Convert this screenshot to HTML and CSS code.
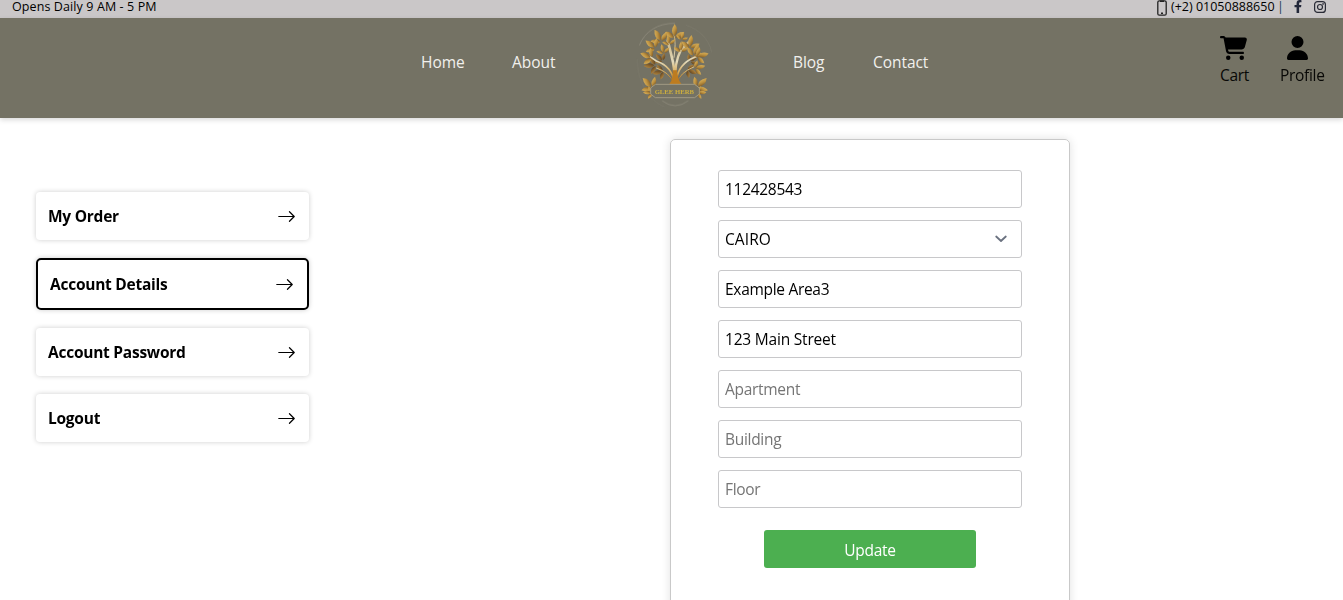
FILE: index.html
```
<!DOCTYPE html>
<html lang="en">
<head>
<meta charset="utf-8">
<title>Glee Herb - Account</title>
<link rel="stylesheet" href="styles.css">
</head>
<body>
<svg class="defs" aria-hidden="true">
  <defs>
    <linearGradient id="gold" x1="0" y1="0" x2="1" y2="1"><stop offset="0" stop-color="#e2bd68"/><stop offset=".5" stop-color="#bd913f"/><stop offset="1" stop-color="#65451f"/></linearGradient>
    <linearGradient id="bronze" x1="0" y1="0" x2="1" y2="1"><stop offset="0" stop-color="#c89543"/><stop offset="1" stop-color="#4c351c"/></linearGradient>
    <linearGradient id="trunk" gradientUnits="userSpaceOnUse" x1="0" y1="60" x2="0" y2="205"><stop offset="0" stop-color="#c5ab75"/><stop offset=".55" stop-color="#e3dabb"/><stop offset=".8" stop-color="#d6a44d"/><stop offset="1" stop-color="#8b5716"/></linearGradient>
    <path id="leaf" d="M0 0Q-14-12 0-32Q14-15 0 0Z"/>
    <g id="sprig"><use href="#leaf"/><use href="#leaf" transform="translate(-2 3) rotate(-58) scale(.85)"/><use href="#leaf" transform="translate(2 3) rotate(58) scale(.85)"/></g>
    <symbol id="arrow" viewBox="0 0 16 16"><path fill-rule="evenodd" d="M1 8a.5.5 0 0 1 .5-.5h11.793l-3.147-3.146a.5.5 0 0 1 .708-.708l4 4a.5.5 0 0 1 0 .708l-4 4a.5.5 0 0 1-.708-.708L13.293 8.5H1.5A.5.5 0 0 1 1 8z"/></symbol>
  </defs>
</svg>
<div class="topbar">
  <span class="hours">Opens Daily 9 AM - 5 PM</span>
  <div class="contact">
    <svg class="phone" viewBox="0 0 10 16"><rect x=".8" y=".8" width="8.4" height="14.4" rx="1.5" fill="none" stroke="#222" stroke-width="1.3"/><path d="M3 1.3h4M4 13.2h2" stroke="#222" stroke-width="1.4"/></svg>
    <span class="number">(+2) 01050888650</span><span class="bar">|</span>
    <svg class="fb" viewBox="0 0 320 512"><path d="M279 288l14-93h-89v-60c0-25 12-50 52-50h41V7s-37-7-72-7c-73 0-121 44-121 125v70H23v93h81v224h100V288z"/></svg>
    <svg class="ig" viewBox="0 0 14 14" fill="none" stroke="#292b36" stroke-width="1.2"><rect x="1.6" y="1.6" width="10.8" height="10.8" rx="3"/><circle cx="7" cy="7" r="2.5"/><circle cx="10.1" cy="3.9" r=".3"/></svg>
  </div>
</div>
<header class="header">
  <nav class="nav">
    <a class="home">Home</a><a class="about">About</a>
    <svg class="logo" viewBox="0 9 300 300">
      <g fill="none" stroke="#aaa697" stroke-width="2" opacity=".65"><path d="M43 91C59 50 98 24 150 25"/><path d="M182 30C224 43 253 74 260 112" opacity=".35"/><path d="M111 257Q150 287 190 257"/><path d="M37 132C35 195 70 258 120 276" opacity=".3"/></g>
      <g fill="url(#bronze)">
        <use href="#sprig" transform="translate(88 151) rotate(-94)"/><use href="#sprig" transform="translate(111 169) rotate(-105) scale(.9)"/><use href="#sprig" transform="translate(111 135) rotate(-47) scale(.8)"/><use href="#sprig" transform="translate(198 139) rotate(44) scale(.85)"/><use href="#sprig" transform="translate(190 166) rotate(110) scale(.85)"/>
      </g>
      <g fill="none" stroke="url(#trunk)" stroke-linecap="round">
        <path d="M149 204Q151 165 139 120L128 77" stroke-width="8"/><path d="M151 204Q148 141 167 107L190 82" stroke-width="7"/><path d="M147 204Q143 155 94 138L69 121" stroke-width="5"/><path d="M154 204Q155 157 196 133L229 118" stroke-width="5"/><path d="M146 204Q133 171 94 159" stroke-width="3"/><path d="M157 204Q163 173 206 156" stroke-width="3"/><path d="M147 127Q154 82 147 60" stroke-width="3"/>
      </g>
      <path d="M143 166Q146 193 133 207H169Q157 192 156 166Z" fill="#bd7c20"/>
      <g fill="url(#gold)">
        <use href="#sprig" transform="translate(149 64) scale(1.15)"/><use href="#sprig" transform="translate(107 76) rotate(-30) scale(1.15)"/><use href="#sprig" transform="translate(88 97) rotate(-52) scale(1.05)"/><use href="#sprig" transform="translate(77 127) rotate(-68) scale(1.05)"/><use href="#sprig" transform="translate(116 112) rotate(-16) scale(.8)"/><use href="#sprig" transform="translate(133 86) rotate(-12) scale(.8)"/><use href="#sprig" transform="translate(170 72) rotate(14) scale(.7)"/><use href="#sprig" transform="translate(195 95) rotate(7) scale(1.1)"/><use href="#sprig" transform="translate(168 107) scale(.85)"/><use href="#sprig" transform="translate(208 119) rotate(20) scale(1.1)"/><use href="#sprig" transform="translate(220 124) rotate(74)"/><use href="#sprig" transform="translate(213 160) rotate(75) scale(.9)"/>
        <use href="#sprig" transform="translate(79 215) rotate(-45) scale(1.15)"/><use href="#sprig" transform="translate(78 233) rotate(-88) scale(.75)"/><use href="#sprig" transform="translate(219 215) rotate(45) scale(1.15)"/><use href="#sprig" transform="translate(220 233) rotate(88) scale(.75)"/>
      </g>
      <path d="M91 208H209L223 219V237L209 248H91L77 237V219Z" fill="#747264" stroke="#aaa28a" stroke-width="2.5"/>
      <text class="brand" x="148" y="236" text-anchor="middle" textLength="118" lengthAdjust="spacingAndGlyphs">GLEE HERB</text>
    </svg>
    <a class="blog">Blog</a><a class="contact-link">Contact</a>
  </nav>
  <div class="actions">
    <a class="action cart"><svg viewBox="0 0 576 512"><path d="M0 24C0 11 11 0 24 0h46c22 0 42 13 51 32h411c27 0 46 25 39 51l-41 152c-9 32-38 53-71 53H171l5 28c2 12 12 20 24 20h288c13 0 24 11 24 24s-11 24-24 24H200c-35 0-65-25-71-59L77 54c-1-4-4-6-7-6H24C11 48 0 37 0 24zm128 440a48 48 0 1 1 96 0 48 48 0 1 1-96 0zm336-48a48 48 0 1 1 0 96 48 48 0 1 1 0-96z"/></svg><span>Cart</span></a>
    <a class="action profile"><svg viewBox="0 0 448 512"><path d="M224 256a128 128 0 1 0 0-256 128 128 0 1 0 0 256zm-46 48C80 304 0 384 0 482c0 17 13 30 30 30h388c17 0 30-13 30-30 0-98-80-178-178-178z"/></svg><span>Profile</span></a>
  </div>
</header>
<main class="main">
  <aside class="menu">
    <a class="item"><span>My Order</span><svg><use href="#arrow"/></svg></a>
    <a class="item active"><span>Account Details</span><svg><use href="#arrow"/></svg></a>
    <a class="item"><span>Account Password</span><svg><use href="#arrow"/></svg></a>
    <a class="item"><span>Logout</span><svg><use href="#arrow"/></svg></a>
  </aside>
  <form class="card">
    <div class="field">112428543</div>
    <div class="field select"><span class="city">CAIRO</span><svg viewBox="0 0 20 20"><path d="M5.2 7.5L10 12l4.8-4.5" fill="none" stroke="#6b7280" stroke-width="1.8" stroke-linecap="round" stroke-linejoin="round"/></svg></div>
    <div class="field">Example Area3</div>
    <div class="field street">123 Main Street</div>
    <div class="field placeholder">Apartment</div>
    <div class="field placeholder">Building</div>
    <div class="field placeholder">Floor</div>
    <button class="update" type="button">Update</button>
  </form>
</main>
</body>
</html>
```
FILE: styles.css
```
* { box-sizing: border-box; }
body { margin: 0; height: 600px; overflow: hidden; background: #fff; color: #000; font: 15.5px/24px "Open Sans", "Noto Sans", sans-serif; letter-spacing: -.3px; }
.defs { position: absolute; width: 0; height: 0; }
svg { display: block; flex: none; }
a, span { white-space: nowrap; }
.topbar { height: 18px; padding: 0 16px 0 12px; display: flex; justify-content: space-between; background: #cac7c8; font-size: 12.5px; line-height: 14px; letter-spacing: .1px; }
.contact { display: flex; align-items: flex-start; }
.phone { width: 10px; height: 16px; margin-right: 4px; }
.number { width: 106px; letter-spacing: 0; }
.bar { width: 16px; color: #173b50; }
.fb { width: 10px; height: 13px; margin-right: 10px; fill: #23283a; }
.ig { width: 14px; height: 14px; }
.header { height: 100px; display: flex; justify-content: space-between; background: #747264; box-shadow: 0 2px 5px rgba(0,0,0,.15); }
.nav { display: flex; align-items: center; padding: 0 0 12px 421px; color: #f1f0ed; letter-spacing: -.05px; }
.home { width: 43px; margin-right: 48px; }
.about { width: 44px; }
.logo { width: 100px; height: 100px; margin: 12px 68px 0 69px; }
.brand { font: bold 21px "Liberation Serif", serif; letter-spacing: 0; fill: #cdae3e; }
.blog { width: 32px; margin-right: 48px; }
.contact-link { width: 56px; }
.actions { display: flex; gap: 31px; padding: 18px 18px 0 0; color: #080806; }
.action { display: flex; flex-direction: column; gap: 3px; }
.cart { width: 29px; }
.profile { width: 45px; }
.action svg { height: 24px; fill: #000; }
.cart svg { width: 27px; }
.profile svg { width: 21px; margin-left: 7px; }
.main { display: flex; align-items: flex-start; padding: 21px 0 0 36px; }
.menu { width: 273px; margin-top: 53px; display: flex; flex-direction: column; gap: 18px; }
.item { height: 48px; padding: 0 13px 0 12px; display: flex; align-items: center; justify-content: space-between; border-radius: 4px; box-shadow: 0 0 5px rgba(0,0,0,.2); font-weight: 700; letter-spacing: -.25px; }
.item svg { width: 19px; height: 19px; }
.active { height: 52px; border: 2px solid #000; border-radius: 5px; }
.card { width: 400px; height: 480px; margin-left: 361px; padding: 30px 47px; display: flex; flex-direction: column; gap: 12px; border: 1px solid #c9c9c9; border-radius: 5px; box-shadow: 0 0 10px rgba(0,0,0,.12); }
.field { flex: none; height: 38px; padding: 0 6px; display: flex; align-items: center; justify-content: space-between; border: 1px solid #c8c8ca; border-radius: 3px; }
.city { letter-spacing: .1px; }
.street { letter-spacing: -.2px; }
.select svg { width: 20px; height: 20px; margin-right: 4px; }
.placeholder { color: #757575; }
.update { flex: none; align-self: center; width: 212px; height: 38px; margin-top: 10px; padding: 2px 0 0; border: 0; border-radius: 3px; background: #4caf50; color: #fff; font: inherit; letter-spacing: inherit; }
```
